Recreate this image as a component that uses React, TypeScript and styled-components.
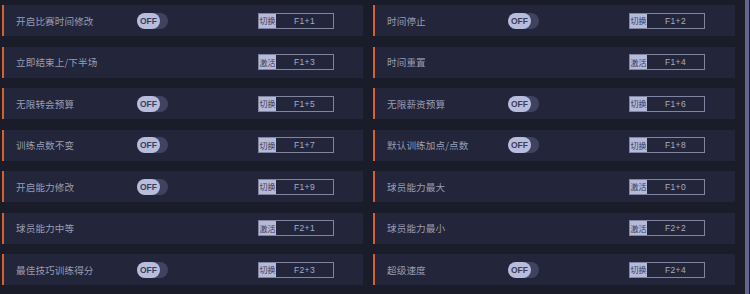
import styled, { createGlobalStyle } from 'styled-components';

type ItemType = {
  label: string;
  toggle: boolean;
  key: string;
};

const items: ItemType[] = [
  { label: '开启比赛时间修改', toggle: true, key: 'F1+1' },
  { label: '时间停止', toggle: true, key: 'F1+2' },
  { label: '立即结束上/下半场', toggle: false, key: 'F1+3' },
  { label: '时间重置', toggle: false, key: 'F1+4' },
  { label: '无限转会预算', toggle: true, key: 'F1+5' },
  { label: '无限薪资预算', toggle: true, key: 'F1+6' },
  { label: '训练点数不变', toggle: true, key: 'F1+7' },
  { label: '默认训练加点/点数', toggle: true, key: 'F1+8' },
  { label: '开启能力修改', toggle: true, key: 'F1+9' },
  { label: '球员能力最大', toggle: false, key: 'F1+0' },
  { label: '球员能力中等', toggle: false, key: 'F2+1' },
  { label: '球员能力最小', toggle: false, key: 'F2+2' },
  { label: '最佳技巧训练得分', toggle: true, key: 'F2+3' },
  { label: '超级速度', toggle: true, key: 'F2+4' },
];

const GlobalStyle = createGlobalStyle`
  html, body {
    margin: 0;
    padding: 0;
    background: #1a1c2a;
    width: 750px;
    height: 294px;
    overflow: hidden;
  }
  body {
    font-family: "Noto Sans CJK SC", "Noto Sans", sans-serif;
  }
`;

export default function App() {
  return (
    <>
      <GlobalStyle />
      <Page>
        <Grid>
          {items.map((item) => (
            <Card key={item.key}>
              <Label>{item.label}</Label>
              <ToggleCell>
                {item.toggle && (
                  <Toggle>
                    <Knob>OFF</Knob>
                  </Toggle>
                )}
              </ToggleCell>
              <Hotkey>
                <Tag>{item.toggle ? '切换' : '激活'}</Tag>
                <KeyText>{item.key}</KeyText>
              </Hotkey>
            </Card>
          ))}
        </Grid>
        <Scrollbar />
      </Page>
    </>
  );
}

const Page = styled.div`
  position: relative;
  width: 750px;
  height: 294px;
  padding: 5px 0 0 2px;
  box-sizing: border-box;
`;

const Grid = styled.div`
  display: grid;
  grid-template-columns: 361px 362px;
  column-gap: 10px;
  row-gap: 10.5px;
`;

const Card = styled.div`
  display: grid;
  grid-template-columns: 121px 121px 76px;
  align-items: center;
  height: 31px;
  box-sizing: border-box;
  padding-left: 12px;
  background: #23263a;
  border-left: 2px solid #d8602a;
`;

const Label = styled.span`
  font-size: 9.6px;
  color: #999cb4;
  white-space: nowrap;
  letter-spacing: 0.1px;
`;

const ToggleCell = styled.div`
  display: flex;
  align-items: center;
`;

const Toggle = styled.div`
  display: flex;
  align-items: center;
  width: 31px;
  height: 16px;
  border-radius: 8px;
  background: #3f4360;
`;

const Knob = styled.span`
  display: flex;
  align-items: center;
  justify-content: center;
  width: 23px;
  height: 16px;
  border-radius: 8px;
  background: #b8bcdd;
  color: #3b3e58;
  font-family: "Liberation Sans", "Noto Sans", sans-serif;
  font-size: 8.5px;
  font-weight: 700;
`;

const Hotkey = styled.div`
  display: flex;
  align-items: stretch;
  width: 76px;
  height: 16px;
  box-sizing: border-box;
  border: 1px solid #80849f;
`;

const Tag = styled.span`
  display: flex;
  align-items: center;
  justify-content: center;
  width: 17px;
  background: #b5b9da;
  color: #3a3d58;
  font-size: 8px;
  white-space: nowrap;
  overflow: hidden;
`;

const KeyText = styled.span`
  flex: 1;
  display: flex;
  align-items: center;
  justify-content: center;
  color: #a9acc2;
  font-family: "Liberation Sans", "Noto Sans", sans-serif;
  font-size: 8.5px;
  letter-spacing: 0.3px;
`;

const Scrollbar = styled.div`
  position: absolute;
  top: 0;
  right: 1px;
  width: 4px;
  height: 294px;
  background: #62678a;
`;
